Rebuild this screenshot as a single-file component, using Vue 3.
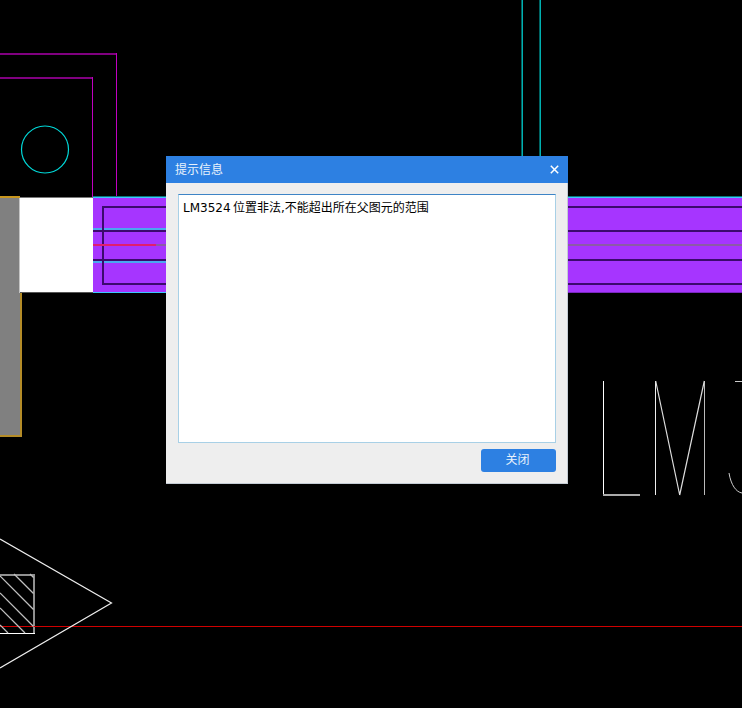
<script setup>
const hatch = [
  [30, 574, 33.5, 577.5],
  [14, 574, 33.5, 593.5],
  [0, 576, 33.5, 609.5],
  [0, 593, 33.5, 626.5],
  [0, 608, 25, 633],
  [0, 625, 8, 633],
]
</script>

<template>
  <div class="screen">
    <!-- drawing canvas -->
    <svg class="cad" width="742" height="708" viewBox="0 0 742 708">
      <g shape-rendering="crispEdges" fill="none">
        <path d="M0 54H117" stroke="#800080" stroke-width="2" />
        <path d="M0 78H93" stroke="#800080" stroke-width="2" />
        <path d="M116.5 53V197" stroke="#c000c0" />
        <path d="M92.5 77V197" stroke="#c000c0" />

        <rect x="0" y="197" width="20" height="239" fill="#808080" />
        <path d="M0 197H20" stroke="#c8961e" stroke-width="2" />
        <path d="M21 293V436" stroke="#b48c28" stroke-width="2" />
        <path d="M0 435.5H22" stroke="#b48c28" stroke-width="2" />
        <rect x="20" y="197" width="73" height="96" fill="#fff" />
        <path d="M19.5 198V293" stroke="#c4c4c4" />
        <path d="M20 197.5H93" stroke="#777" />
        <path d="M20 292.5H93" stroke="#555" />

        <rect x="93" y="197" width="649" height="96" fill="#a635ff" />
        <path d="M93 196.5H742" stroke="#0a7878" />
        <path d="M93 197.5H742" stroke="#3cc8ff" />
        <path d="M93 292.5H170" stroke="#3cc8ff" />
        <path d="M568 292.5H742" stroke="#7a28c0" />
        <path d="M93 229H170M93 262H170" stroke="#4aa8f0" stroke-width="2" />
        <path d="M742 207H103V284H742" stroke="#3c0a6e" stroke-width="2" />
        <path d="M93 231H742M93 260H742" stroke="#3c0a6e" stroke-width="2" />
        <path d="M93 245H156" stroke="#e01e6e" stroke-width="2" />
        <path d="M156 245H742" stroke="#8c5aa8" stroke-width="2" />

        <path d="M603.5 381V495" stroke="#fff" />
        <path d="M603 495H640" stroke="#aaa" stroke-width="2" />
        <path d="M655.5 381V495" stroke="#eee" />
        <path d="M704.5 381V495" stroke="#bbb" />
        <path d="M735 381.5H742" stroke="#ccc" />

        <path d="M0 574.5H34" stroke="#909090" stroke-width="2" />
        <path d="M34 574V633" stroke="#909090" stroke-width="2" />
        <path d="M0 633.5H35" stroke="#fff" />
        <path d="M0 626.5H742" stroke="#d00000" />
      </g>
      <g fill="none">
        <path d="M522.2 0V156M540.2 0V156" stroke="#00c4c4" stroke-width="1.4" />
        <circle cx="45" cy="149.5" r="23.5" stroke="#00d8d8" stroke-width="1.2" />
        <path d="M655.7 381L679.7 495L704.3 381" stroke="#ddd" stroke-width="1.2" />
        <path d="M729 473C731 485 736 492 742 493" stroke="#ccc" />
        <path d="M0 539L111.5 603L0 668" stroke="#eee" stroke-width="1.2" />
        <path v-for="(l, i) in hatch" :key="i" :d="`M${l[0]} ${l[1]}L${l[2]} ${l[3]}`" stroke="#c0c0c0" stroke-width="1.2" />
      </g>
    </svg>

    <!-- message box -->
    <div class="dialog">
      <div class="title-bar">
        <span class="title">提示信息</span>
        <svg class="close" width="9" height="9" viewBox="0 0 9 9">
          <path d="M0.8 0.8L8.2 8.2M8.2 0.8L0.8 8.2" stroke="#fff" stroke-width="1.5" fill="none" />
        </svg>
      </div>
      <div class="body">
        <div class="message">LM3524 位置非法,不能超出所在父图元的范围</div>
        <div class="actions">
          <button class="btn" type="button">关闭</button>
        </div>
      </div>
    </div>
  </div>
</template>

<style scoped>
.screen {
  position: relative;
  width: 742px;
  height: 708px;
  overflow: hidden;
  background: #000;
  font-family: "DejaVu Sans", "Noto Sans CJK SC", sans-serif;
  font-size: 12px;
}

.cad {
  position: absolute;
  left: 0;
  top: 0;
  display: block;
}

.dialog {
  position: absolute;
  left: 166px;
  top: 156px;
  width: 402px;
  height: 328px;
  box-sizing: border-box;
  display: flex;
  flex-direction: column;
  background: #eee;
  border-right: 1px solid #c4ccd4;
  border-bottom: 1px solid #c4ccd4;
}

.title-bar {
  height: 27px;
  flex: none;
  display: flex;
  align-items: center;
  justify-content: space-between;
  padding: 0 9px;
  background: #2d80e2;
  color: #fff;
  margin-right: -1px;
}

.title {
  line-height: 26px;
  color: #e8f2fc;
}

.close {
  display: block;
  margin-top: -1px;
}

.body {
  flex: 1;
  display: flex;
  flex-direction: column;
  padding: 11px 11px 11px 12px;
  gap: 6px;
}

.message {
  flex: 1;
  box-sizing: border-box;
  background: #fff;
  border: 1px solid #a8d0e6;
  border-top-color: #3d84c6;
  padding: 5px 4px 4px;
  line-height: 17px;
  word-spacing: -1.5px;
  color: #000;
}

.actions {
  display: flex;
  justify-content: flex-end;
}

.btn {
  width: 75px;
  height: 23px;
  padding: 0 2px 0 0;
  border: none;
  border-radius: 3px;
  background: #2d80e2;
  color: #e8f2fc;
  font-family: inherit;
  font-size: 12px;
  line-height: 23px;
}
</style>
